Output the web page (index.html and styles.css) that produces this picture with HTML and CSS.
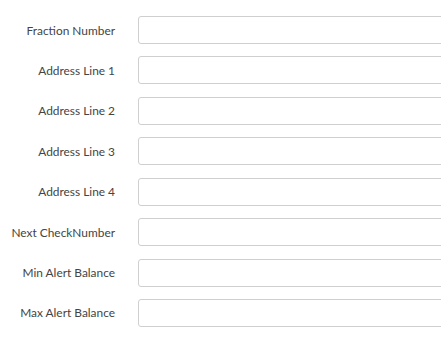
FILE: index.html
```html
<!doctype html>
<html>
  <head>
    <link rel="stylesheet" href="styles.css">
  </head>
  <body>
    <form class="settingsForm">
      <label class="fieldLabel" for="fractionNumber">Fraction Number</label>
      <div class="fieldBox"><input class="fieldInput" id="fractionNumber" type="text"></div>

      <label class="fieldLabel" for="address1">Address Line 1</label>
      <div class="fieldBox"><input class="fieldInput" id="address1" type="text"></div>

      <label class="fieldLabel" for="address2">Address Line 2</label>
      <div class="fieldBox"><input class="fieldInput" id="address2" type="text"></div>

      <label class="fieldLabel" for="address3">Address Line 3</label>
      <div class="fieldBox"><input class="fieldInput" id="address3" type="text"></div>

      <label class="fieldLabel" for="address4">Address Line 4</label>
      <div class="fieldBox"><input class="fieldInput" id="address4" type="text"></div>

      <label class="fieldLabel" for="nextCheck">Next CheckNumber</label>
      <div class="fieldBox"><input class="fieldInput" id="nextCheck" type="text"></div>

      <label class="fieldLabel" for="minAlert">Min Alert Balance</label>
      <div class="fieldBox"><input class="fieldInput" id="minAlert" type="text"></div>

      <label class="fieldLabel" for="maxAlert">Max Alert Balance</label>
      <div class="fieldBox"><input class="fieldInput" id="maxAlert" type="text"></div>
    </form>
  </body>
</html>
```

FILE: styles.css
```css
body {
  margin:0;
  background-color:#fff;
  font-family:Lato, "Liberation Sans", sans-serif;
}

.settingsForm {
  display:grid;
  grid-template-columns:115px 1fr;
  column-gap:23px;
  row-gap:12.43px;
  padding-top:16px;
}

.fieldLabel {
  align-self:center;
  text-align:right;
  font-size:11.9px;
  color:#444;
}

/* the inputs run on past the right edge of the window */
.fieldBox {
  overflow:hidden;
  height:28px;
}

.fieldInput {
  box-sizing:border-box;
  display:block;
  height:28px;
  width:calc(100% + 40px);
  margin:0;
  border:1px solid #cfcfcf;
  border-radius:3px;
  background-color:#fff;
}
```
